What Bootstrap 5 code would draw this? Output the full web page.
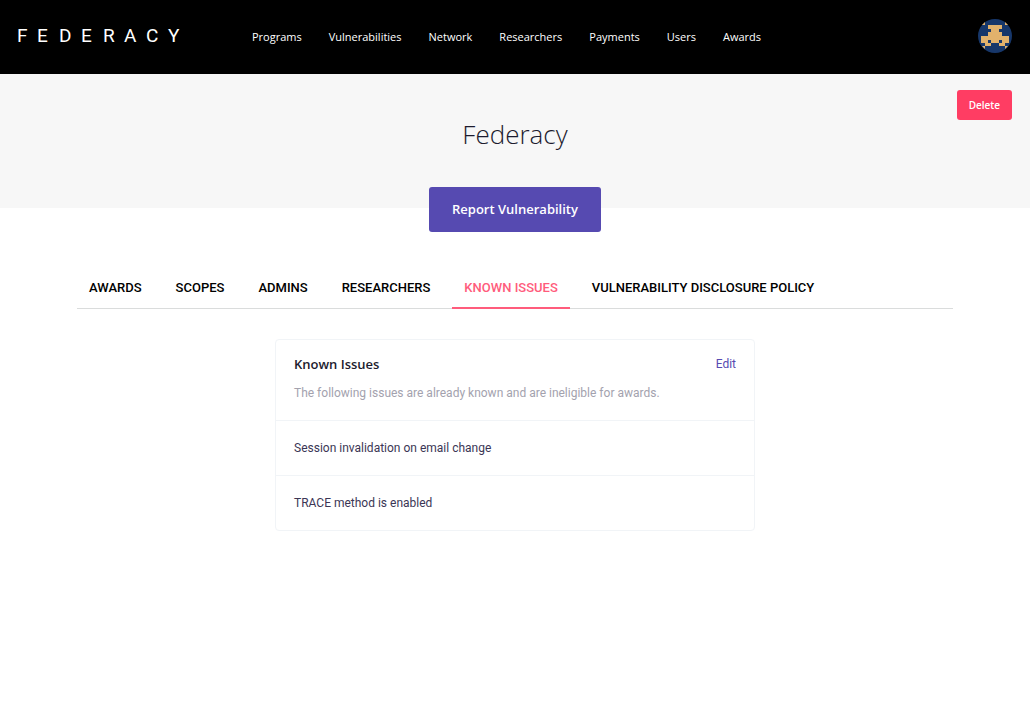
<!DOCTYPE html>
<html lang="en">
<head>
<meta charset="utf-8">
<meta name="viewport" content="width=device-width, initial-scale=1">
<title>Federacy</title>
<link href="https://cdn.jsdelivr.net/npm/bootstrap@5.3.0/dist/css/bootstrap.min.css" rel="stylesheet">
<style>
body { font-family: "Open Sans", "Noto Sans", sans-serif; color: #1c1b2e; background: #fff; }
.topbar { background: #000; min-height: 74px; padding: 0 18px 2px; }
.wordmark { width: 234px; }
.wordmark svg { overflow: visible; display: block; }
.wordmark text { font-family: Roboto, sans-serif; font-size: 19px; fill: #fff; }
.topbar .nav { gap: 27px; padding-top: 2px; }
.topbar .nav a { color: #fff; font-size: 11px; line-height: 16px; }
.avatar svg { display: block; }
.hero { background: #f7f7f7; padding: 16px 18px 0; }
.hero h1 { font-weight: 300; font-size: 26px; line-height: 34px; margin: -3px 0 36px; }
.btn-delete { --bs-btn-color: #fff; --bs-btn-bg: #ff3d63; --bs-btn-hover-bg: #e8345a; --bs-btn-hover-color: #fff; font: 600 10px/14px "Open Sans", sans-serif; border: 0; border-radius: 3px; padding: 8px 12px; }
.btn-report { --bs-btn-color: #fff; --bs-btn-bg: #564ab1; --bs-btn-hover-bg: #483da0; --bs-btn-hover-color: #fff; min-width: 172px; font: 600 13px/21px "Open Sans", sans-serif; border: 0; border-radius: 3px; padding: 12px 20px; margin-bottom: -24px; }
.page-body { padding: 58px 77px 0; }
.tabs { border-bottom: 1px solid #dadcdc; gap: 10px; }
.tabs a { color: #000; font: 500 13px/18px Roboto, sans-serif; padding: 13px 12px 10px; border-bottom: 2px solid transparent; margin-bottom: -1px; white-space: nowrap; }
.tabs a.active { color: #ff5c7c; border-color: #ff5c7c; }
.issues { max-width: 480px; margin: 30px auto; border: 1px solid #f1f4f7; border-radius: 4px; }
.issues .list-group-item { padding: 18px; border-color: #f1f4f7; font: 12px/18px Roboto, sans-serif; color: #3b3655; }
.issues .list-group-item:first-child { padding-top: 15px; }
.issues h2 { font: 600 13px/18px "Open Sans", sans-serif; margin: 0; color: #1c1b2e; }
.issues a { color: #564ab1; }
.issues p { color: #a3a2ae; margin: 11px 0 0; }
</style>
</head>
<body>
<header class="topbar d-flex align-items-center">
  <a class="wordmark" href="#" aria-label="Federacy home"><svg width="166" height="24" viewBox="0 0 166 24"><text x="-1 19 41 63 85 106 128 150" y="18">FEDERACY</text></svg></a>
  <nav class="nav" aria-label="Main">
    <a class="text-decoration-none" href="#">Programs</a>
    <a class="text-decoration-none" href="#">Vulnerabilities</a>
    <a class="text-decoration-none" href="#">Network</a>
    <a class="text-decoration-none" href="#">Researchers</a>
    <a class="text-decoration-none" href="#">Payments</a>
    <a class="text-decoration-none" href="#">Users</a>
    <a class="text-decoration-none" href="#">Awards</a>
  </nav>
  <a class="avatar ms-auto" href="#" aria-label="Account"><svg width="34" height="34" viewBox="0 0 34 34"><circle cx="17" cy="17" r="17" fill="#17376a"/><path fill="#e2b26c" d="M10 6h14v4h-3v3h3v4h7v7h-4v3h-6v-3h3v-3h-3v3h-8v-3h-3v3h3v3H7v-3H3v-7h7v-4h3v-3h-3zM5 5l2-2v3H4zM29 5l-2-2v3h3zM4 27h3v3l-3-3zM30 27h-3v3l3-3z"/></svg></a>
</header>
<main>
  <section class="hero d-flex flex-column">
    <button class="btn btn-delete align-self-end">Delete</button>
    <h1 class="text-center">Federacy</h1>
    <button class="btn btn-report align-self-center">Report Vulnerability</button>
  </section>
  <div class="page-body">
    <nav class="tabs d-flex" aria-label="Program sections">
      <a class="text-decoration-none" href="#">AWARDS</a>
      <a class="text-decoration-none" href="#">SCOPES</a>
      <a class="text-decoration-none" href="#">ADMINS</a>
      <a class="text-decoration-none" href="#">RESEARCHERS</a>
      <a class="text-decoration-none active" href="#" aria-current="page">KNOWN ISSUES</a>
      <a class="text-decoration-none" href="#">VULNERABILITY DISCLOSURE POLICY</a>
    </nav>
    <section class="issues">
      <ul class="list-group list-group-flush rounded">
        <li class="list-group-item">
          <div class="d-flex justify-content-between"><h2>Known Issues</h2><a class="text-decoration-none" href="#">Edit</a></div>
          <p>The following issues are already known and are ineligible for awards.</p>
        </li>
        <li class="list-group-item">Session invalidation on email change</li>
        <li class="list-group-item">TRACE method is enabled</li>
      </ul>
    </section>
  </div>
</main>
</body>
</html>
